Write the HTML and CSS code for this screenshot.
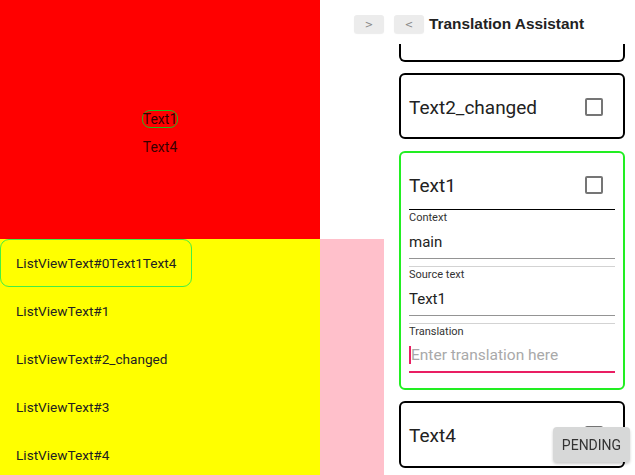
FILE: index.html
```html
<!DOCTYPE html>
<html>
<head>
<meta charset="utf-8">
<link rel="stylesheet" href="styles.css">
</head>
<body>
<div class="page">
  <div class="left">
    <div class="red">
      <div class="red-sel">Text1</div>
      <div class="red-item">Text4</div>
    </div>
    <div class="yellow">
      <div class="li sel">ListViewText#0Text1Text4</div>
      <div class="li">ListViewText#1</div>
      <div class="li">ListViewText#2_changed</div>
      <div class="li">ListViewText#3</div>
      <div class="li">ListViewText#4</div>
    </div>
  </div>
  <div class="mid">
    <div class="mid-top"><button class="nav">&gt;</button></div>
    <div class="pink"></div>
  </div>
  <div class="panel">
    <div class="head">
      <button class="nav">&lt;</button>
      <span class="title">Translation Assistant</span>
    </div>
    <div class="cards">
      <div class="card partial"></div>
      <div class="card">
        <div class="card-head"><span class="name">Text2_changed</span><span class="cb"></span></div>
      </div>
      <div class="card active">
        <div class="card-head"><span class="name">Text1</span><span class="cb"></span></div>
        <div class="details">
          <div class="field first">
            <div class="label">Context</div>
            <div class="value">main</div>
          </div>
          <div class="field">
            <div class="label">Source text</div>
            <div class="value">Text1</div>
          </div>
          <div class="field last">
            <div class="label">Translation</div>
            <div class="input"><span class="caret"></span><span class="ph">Enter translation here</span></div>
          </div>
        </div>
      </div>
      <div class="card tall">
        <div class="card-head"><span class="name">Text4</span><span class="cb"></span></div>
      </div>
    </div>
  </div>
</div>
<button class="pending">PENDING</button>
</body>
</html>
```
FILE: styles.css
```css
html, body {
  margin: 0;
  padding: 0;
  height: 475px;
  overflow: hidden;
  background: #fff;
  font-family: Roboto, "Noto Sans", sans-serif;
  color: rgba(0, 0, 0, 0.87);
}
.page {
  display: grid;
  grid-template-columns: 320px 64px 1fr;
  height: 475px;
}
.left {
  display: flex;
  flex-direction: column;
}
.red {
  background: #ff0000;
  height: 239px;
  display: flex;
  flex-direction: column;
  align-items: center;
  padding-top: 110px;
  box-sizing: border-box;
  font-size: 14px;
  color: rgba(0, 0, 0, 0.8);
}
.red-sel {
  border: 1px solid #22bb22;
  border-radius: 8px;
  line-height: 16px;
  padding: 0;
}
.red-item {
  margin-top: 10px;
  line-height: 18px;
}
.yellow {
  background: #ffff00;
  flex: 1;
  font-size: 13.6px;
}
.li {
  height: 48px;
  box-sizing: border-box;
  width: fit-content;
  padding: 0 15px;
  border: 1px solid transparent;
  display: flex;
  align-items: center;
  color: #222;
}
.li.sel {
  border-color: #44ee44;
  border-radius: 9px;
}
.mid {
  display: flex;
  flex-direction: column;
}
.mid-top {
  height: 239px;
  display: flex;
  justify-content: flex-end;
  align-items: flex-start;
  padding-top: 15px;
  box-sizing: border-box;
}
.pink {
  flex: 1;
  background: #ffc0cb;
}
.nav {
  width: 30px;
  height: 18px;
  border: none;
  border-radius: 3px;
  background: #ececec;
  color: #888;
  font-family: "DejaVu Sans", sans-serif;
  font-size: 10px;
  padding: 0;
  box-shadow: 0 1px 1px rgba(0, 0, 0, 0.08);
}
.panel {
  display: flex;
  flex-direction: column;
  overflow: hidden;
}
.head {
  display: flex;
  align-items: center;
  height: 44px;
  padding: 15px 0 11px 10px;
  box-sizing: border-box;
}
.title {
  margin-left: 5px;
  font-family: "Liberation Sans", Arial, sans-serif;
  font-weight: bold;
  font-size: 15.4px;
  color: #222;
}
.cards {
  display: flex;
  flex-direction: column;
  padding-left: 15px;
  width: 226px;
}
.card {
  border: 2px solid #000;
  border-radius: 6px;
  padding: 0 8px;
  margin-bottom: 11px;
  box-sizing: border-box;
}
.card.partial {
  border-top: none;
  border-radius: 0 0 6px 6px;
  height: 18px;
}
.card-head {
  height: 62px;
  padding-top: 8px;
  padding-bottom: 6px;
  box-sizing: border-box;
  display: flex;
  align-items: center;
  justify-content: space-between;
}
.card.tall .card-head {
  height: 63px;
  padding-bottom: 7px;
}
.name {
  font-size: 19px;
  color: #222;
}
.cb {
  width: 18px;
  height: 18px;
  border: 2px solid #757575;
  border-radius: 2px;
  box-sizing: border-box;
  margin-right: 12px;
}
.card.active {
  border-color: #22ee22;
  margin-top: 1px;
  padding-bottom: 15px;
}
.card.active .card-head {
  height: 56px;
  padding-bottom: 0;
}
.details {
  border-top: 1px solid #000;
}
.field {
  border-bottom: 1px solid #949494;
}
.field + .field {
  margin-top: 7px;
  border-top: 1px solid #d3d3d3;
}
.field.last {
  border-bottom: 2px solid #e91e63;
}
.label {
  height: 15px;
  line-height: 15px;
  font-size: 11px;
  color: #333;
}
.value {
  height: 33px;
  display: flex;
  align-items: center;
  font-size: 15px;
  color: #222;
}
.input {
  height: 32px;
  display: flex;
  align-items: center;
  font-size: 15.5px;
}
.caret {
  width: 2px;
  height: 18px;
  background: #e91e63;
}
.ph {
  color: #a9a9a9;
}
.pending {
  position: fixed;
  right: 5px;
  bottom: 13px;
  width: 77px;
  height: 35px;
  border: none;
  border-radius: 4px;
  background: #d7d8d8;
  color: #333;
  font-family: Roboto, sans-serif;
  font-size: 14px;
  padding: 0;
  box-shadow: 0 2px 3px rgba(0, 0, 0, 0.2);
}
```
